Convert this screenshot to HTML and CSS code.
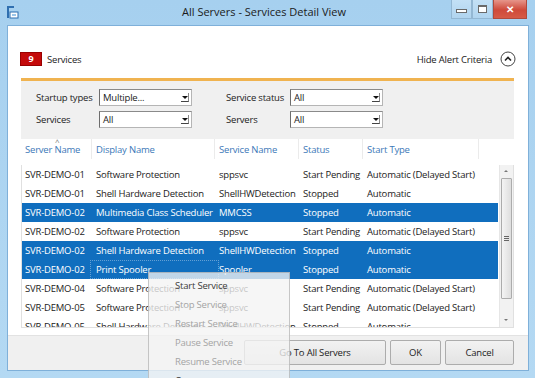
FILE: index.html
```html
<!DOCTYPE html>
<html lang="en">
<head>
    <meta charset="UTF-8">
    <meta name="viewport" content="width=device-width, initial-scale=1.0">
    <title>All Servers - Services Detail View</title>
    <link rel="stylesheet" href="styles.css">
</head>
<body>
    <div class="window">
        <div class="titlebar">
            <svg class="app-icon" width="13" height="14" viewBox="0 0 13 14">
                <rect x="1" y="1" width="2" height="12" fill="#2f6fb0"/>
                <rect x="3" y="1" width="5" height="2" fill="#2f6fb0"/>
                <rect x="4" y="7" width="8" height="6" fill="#ffffff" stroke="#2f6fb0" stroke-width="1"/>
                <rect x="6" y="9" width="4" height="2" fill="#9cc6ea"/>
            </svg>
            <div class="title">All Servers - Services Detail View</div>
            <div class="caption-buttons">
                <span class="cap-button"><span class="min-glyph"></span></span>
                <span class="cap-button"><span class="max-glyph"></span></span>
                <span class="cap-button close-button">&#x2715;</span>
            </div>
        </div>

        <div class="client">
            <div class="client-body">
                <div class="summary">
                    <span class="count-badge">9</span>
                    <span class="summary-label">Services</span>
                    <span class="hide-criteria">
                        Hide Alert Criteria
                        <svg width="16" height="16" viewBox="0 0 16 16">
                            <circle cx="8" cy="8" r="7" fill="none" stroke="#444" stroke-width="1"/>
                            <path d="M5 9.5 L8 6.5 L11 9.5" fill="none" stroke="#222" stroke-width="1.6"/>
                        </svg>
                    </span>
                </div>

                <div class="criteria">
                    <span class="criteria-label">Startup types</span>
                    <span class="dropdown"><span class="dropdown-text">Multiple...</span><span class="dropdown-arrow"></span></span>
                    <span class="criteria-label">Service status</span>
                    <span class="dropdown"><span class="dropdown-text">All</span><span class="dropdown-arrow"></span></span>
                    <span class="criteria-label">Services</span>
                    <span class="dropdown"><span class="dropdown-text">All</span><span class="dropdown-arrow"></span></span>
                    <span class="criteria-label">Servers</span>
                    <span class="dropdown"><span class="dropdown-text">All</span><span class="dropdown-arrow"></span></span>
                </div>

                <div class="grid-header">
                    <span class="header-cell sorted">Server Name</span>
                    <span class="header-cell">Display Name</span>
                    <span class="header-cell">Service Name</span>
                    <span class="header-cell">Status</span>
                    <span class="header-cell">Start Type</span>
                </div>

                <div class="list">
                    <div class="rows">
                        <div class="row"><span>SVR-DEMO-01</span><span>Software Protection</span><span>sppsvc</span><span>Start Pending</span><span>Automatic (Delayed Start)</span></div>
                        <div class="row"><span>SVR-DEMO-01</span><span>Shell Hardware Detection</span><span>ShellHWDetection</span><span>Stopped</span><span>Automatic</span></div>
                        <div class="row selected"><span>SVR-DEMO-02</span><span>Multimedia Class Scheduler</span><span>MMCSS</span><span>Stopped</span><span>Automatic</span></div>
                        <div class="row"><span>SVR-DEMO-02</span><span>Software Protection</span><span>sppsvc</span><span>Start Pending</span><span>Automatic (Delayed Start)</span></div>
                        <div class="row selected"><span>SVR-DEMO-02</span><span>Shell Hardware Detection</span><span>ShellHWDetection</span><span>Stopped</span><span>Automatic</span></div>
                        <div class="row selected"><span>SVR-DEMO-02</span><span class="focused">Print Spooler</span><span>Spooler</span><span>Stopped</span><span>Automatic</span></div>
                        <div class="row"><span>SVR-DEMO-04</span><span>Software Protection</span><span>sppsvc</span><span>Start Pending</span><span>Automatic (Delayed Start)</span></div>
                        <div class="row"><span>SVR-DEMO-05</span><span>Software Protection</span><span>sppsvc</span><span>Start Pending</span><span>Automatic (Delayed Start)</span></div>
                        <div class="row"><span>SVR-DEMO-05</span><span>Shell Hardware Detection</span><span>ShellHWDetection</span><span>Stopped</span><span>Automatic</span></div>
                    </div>
                    <div class="scrollbar">
                        <span class="scroll-arrow up"></span>
                        <span class="scroll-thumb"><span class="grip"></span></span>
                        <span class="scroll-arrow down"></span>
                    </div>
                </div>
            </div>

            <div class="footer">
                <button class="dialog-button wide">Go To All Servers</button>
                <button class="dialog-button ok">OK</button>
                <button class="dialog-button cancel">Cancel</button>
            </div>
        </div>

        <div class="context-menu">
            <div class="menu-item">Start Service</div>
            <div class="menu-item disabled">Stop Service</div>
            <div class="menu-item disabled">Restart Service</div>
            <div class="menu-item disabled">Pause Service</div>
            <div class="menu-item disabled">Resume Service</div>
            <div class="menu-item">Copy</div>
        </div>
    </div>
</body>
</html>
```

FILE: styles.css
```css
body {
    margin: 0;
    background-color: #a9d2ef;
    font-family: "Open Sans", "Noto Sans", sans-serif;
    font-size: 9.5px;
    letter-spacing: -0.2px;
    color: #222;
}
.window {
    position: relative;
    width: 535px;
    height: 378px;
    display: flex;
    flex-direction: column;
    background: linear-gradient(#a6d0ef, #b4d9f3);
    overflow: hidden;
}
.titlebar {
    height: 25px;
    display: flex;
    align-items: flex-start;
    flex-shrink: 0;
}
.app-icon {
    margin: 5px 0 0 6px;
}
.title {
    flex: 1;
    text-align: center;
    font-size: 11px;
    letter-spacing: 0;
    line-height: 24px;
    color: #1b1b1b;
    padding-left: 58px;
}
.caption-buttons {
    display: flex;
    margin-right: 8px;
}
.cap-button {
    width: 21px;
    height: 19px;
    display: flex;
    align-items: center;
    justify-content: center;
    border: 1px solid #93b7d3;
    border-top: none;
    background: linear-gradient(#c3e0f5, #b0d4ef);
    box-sizing: border-box;
}
.min-glyph {
    width: 9px;
    height: 2px;
    border: 1px solid #6a6a6a;
    background-color: #fff;
    margin-top: 4px;
}
.max-glyph {
    width: 7px;
    height: 5px;
    border: 1px solid #6a6a6a;
    border-top-width: 2px;
    background-color: #fff;
}
.close-button {
    width: 34px;
    color: #fff;
    font-size: 10px;
    font-weight: bold;
    border-color: #b04a3c;
    background: linear-gradient(#e6958a, #cf4a3a 55%, #d65a46);
}
.client {
    flex: 1;
    margin: 0 6px 8px 7px;
    background-color: #fff;
    border: 1px solid #7fb0d9;
    display: flex;
    flex-direction: column;
}
.client-body {
    flex: 1;
    padding: 0 14px 0 13px;
}
.summary {
    display: flex;
    align-items: center;
    height: 14px;
    margin-top: 26px;
}
.count-badge {
    width: 22px;
    height: 14px;
    margin-left: -1px;
    background-color: #c40a0a;
    border: 1px solid #9a0000;
    box-sizing: border-box;
    color: #fff;
    font-weight: bold;
    font-size: 9px;
    line-height: 12px;
    text-align: center;
}
.summary-label {
    margin-left: 5px;
}
.hide-criteria {
    margin-left: auto;
    display: flex;
    align-items: center;
    gap: 8px;
    margin-right: -2px;
}
.criteria {
    margin-top: 12px;
    border-top: 3px solid #f0b350;
    background-color: #f0f0f0;
    padding: 8px 0 11px 15px;
    display: grid;
    grid-template-columns: 63px 127px 64px 94px;
    grid-auto-rows: 17px;
    row-gap: 5px;
    align-items: center;
    white-space: nowrap;
}
.dropdown {
    width: 93px;
    height: 17px;
    box-sizing: border-box;
    display: flex;
    align-items: center;
    background-color: #fff;
    border: 1px solid #b5b5b5;
    border-left-color: #6d6d6d;
    border-top-color: #8a8a8a;
}
.dropdown-text {
    flex: 1;
    padding-left: 3px;
}
.dropdown-arrow {
    width: 8px;
    height: 9px;
    margin-right: 2px;
    box-sizing: border-box;
    border-right: 1px solid #888;
    border-bottom: 1px solid #444;
    position: relative;
}
.dropdown-arrow::after {
    content: "";
    position: absolute;
    left: 1px;
    top: 3px;
    border-left: 3px solid transparent;
    border-right: 3px solid transparent;
    border-top: 3px solid #111;
}
.grid-header {
    height: 26px;
    display: grid;
    grid-template-columns: 71px 123px 84px 64px 116px 1fr;
    align-items: start;
    color: #3c78b8;
}
.header-cell {
    position: relative;
    padding: 4px 0 0 4px;
    height: 20px;
    box-sizing: border-box;
    border-right: 1px solid #ebebeb;
}
.sorted::before {
    content: "^";
    position: absolute;
    left: 34px;
    top: -3px;
    font-size: 8px;
    color: #777;
}
.list {
    height: 163px;
    display: flex;
    border: 1px solid #e0e0e0;
    border-top: none;
    box-sizing: border-box;
}
.rows {
    flex: 1;
    overflow: hidden;
}
.row {
    height: 19px;
    display: grid;
    grid-template-columns: 71px 123px 84px 64px 1fr;
    align-items: center;
    white-space: nowrap;
}
.row span {
    padding-left: 3px;
}
.row.selected {
    background-color: #106ebe;
    color: #fff;
}
.focused {
    outline: 1px dotted rgba(255, 255, 255, 0.35);
    outline-offset: 2px;
}
.scrollbar {
    width: 13px;
    margin-left: 1px;
    display: flex;
    flex-direction: column;
    background-color: #f2f2f2;
    border-left: 1px solid #e6e6e6;
}
.scroll-arrow {
    height: 12px;
    position: relative;
}
.scroll-arrow::after {
    content: "";
    position: absolute;
    left: 4px;
    border-left: 2px solid transparent;
    border-right: 2px solid transparent;
}
.scroll-arrow.up::after {
    top: 5px;
    border-bottom: 2px solid #777;
}
.scroll-arrow.down {
    margin-top: auto;
}
.scroll-arrow.down::after {
    top: 4px;
    border-top: 2px solid #777;
}
.scroll-thumb {
    height: 119px;
    margin: 1px 1px 0 1px;
    border: 1px solid #acacac;
    border-radius: 1px;
    background: linear-gradient(to right, #f4f4f4, #dedede);
    display: flex;
    align-items: center;
    justify-content: center;
}
.grip {
    width: 5px;
    height: 5px;
    background: repeating-linear-gradient(#666 0 1px, transparent 1px 2px);
}
.footer {
    margin-top: 7px;
    height: 35px;
    padding: 4px 14px 0 0;
    box-sizing: border-box;
    background-color: #f0f0f0;
    border-top: 1px solid #e2e2e2;
    display: flex;
    justify-content: flex-end;
    gap: 4px;
}
.dialog-button {
    height: 25px;
    font-family: inherit;
    font-size: 9.5px;
    letter-spacing: -0.2px;
    color: #222;
    border: 1px solid #acacac;
    border-radius: 2px;
    background: linear-gradient(#f2f2f2, #e3e3e3);
    padding: 0;
}
.wide {
    width: 142px;
}
.ok {
    width: 51px;
}
.cancel {
    width: 69px;
}
.context-menu {
    position: absolute;
    left: 148px;
    top: 272px;
    width: 142px;
    height: 120px;
    padding-top: 3px;
    box-sizing: border-box;
    background-color: rgba(244, 244, 244, 0.78);
    border: 1px solid rgba(140, 140, 140, 0.45);
}
.menu-item {
    height: 19px;
    line-height: 19px;
    padding-left: 26px;
    color: #3a3a3a;
}
.menu-item.disabled {
    color: #a4a4a4;
}
```
